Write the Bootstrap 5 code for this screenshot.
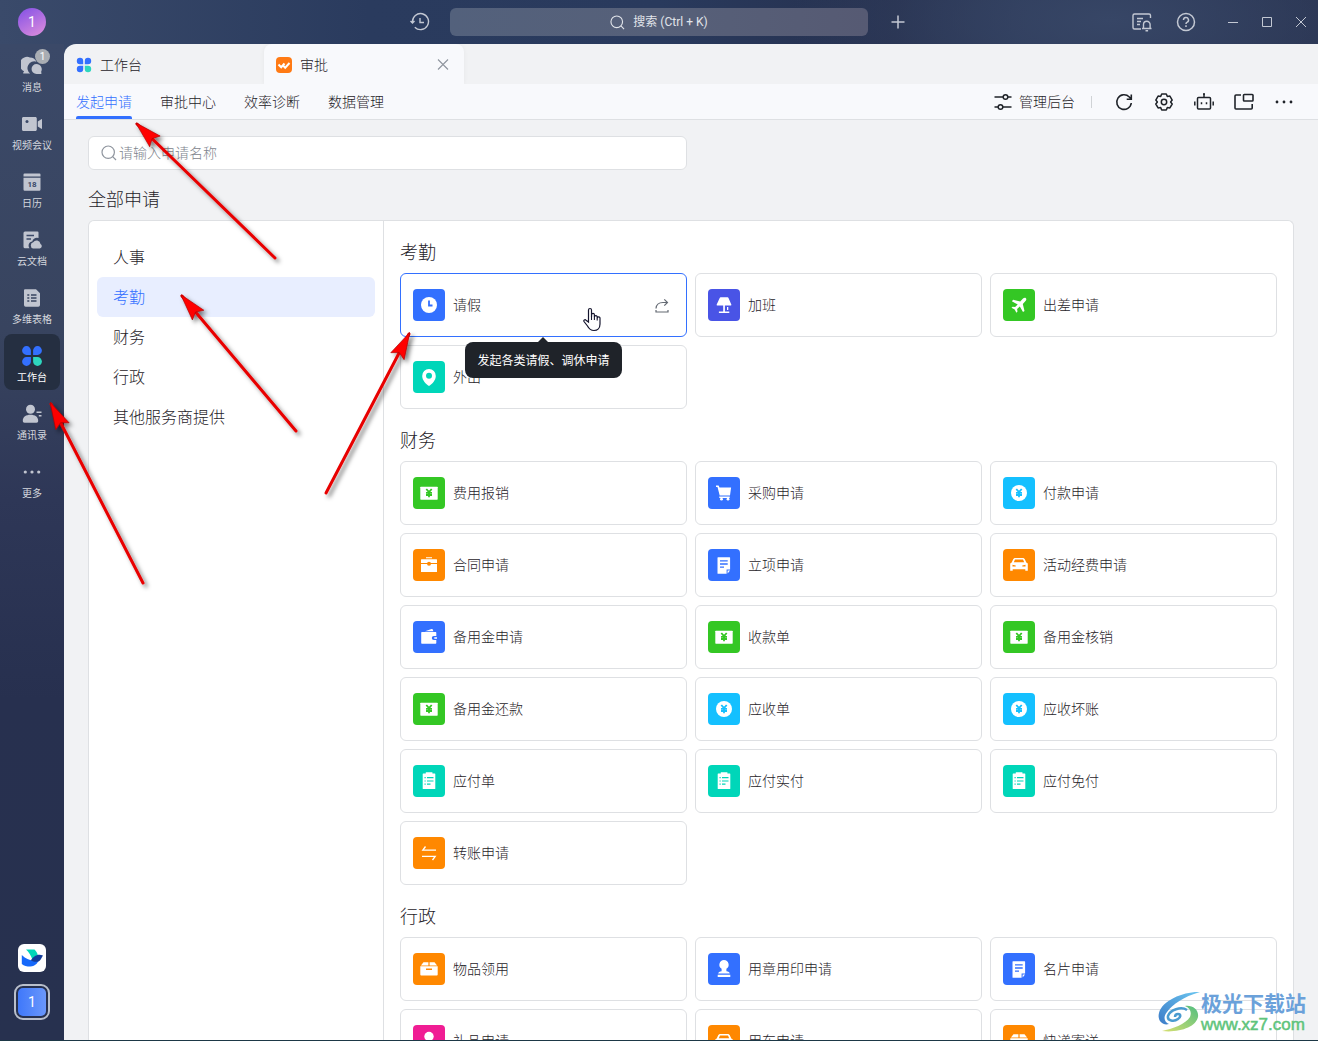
<!DOCTYPE html>
<html lang="zh-CN">
<head>
<meta charset="utf-8">
<meta name="viewport" content="width=device-width, initial-scale=1">
<title>工作台 - 审批</title>
<link href="https://cdn.jsdelivr.net/npm/bootstrap@5.3.0/dist/css/bootstrap.min.css" rel="stylesheet">
<style>
:root{--ink:#1f2329;--line:#dee0e3;--blue:#3370ff}
body{font-family:Roboto,"Noto Sans CJK SC",sans-serif;font-size:14px;line-height:20px;font-weight:300;color:var(--ink);background:#27314f}
button{font-weight:inherit;color:inherit}
svg{flex:none;display:block}
.app{height:100vh;overflow:hidden;border-bottom:1px solid #1d3846;
 background:radial-gradient(ellipse 320px 120px at 1110px 20px,#374666,transparent),linear-gradient(180deg,transparent 44px,#3b4968 44px,#38445f 330px,#2e3757 500px,#27304f 700px,#27314f) 0 0/64px 100% no-repeat,linear-gradient(90deg,#3a4a6a,#2a3b5e 28%,#293a5d 50%,#26304e 68%,#2b3857 78%,#28324f)}
.topbar{height:44px;flex:none;display:grid;grid-template-columns:1fr auto 1fr;color:#c3c8d3}
.bare{border:0;background:none;padding:0;display:flex;align-items:center;justify-content:center;color:inherit}
.bare.avatar{width:28px;height:28px;background:linear-gradient(150deg,#8250e6,#e08fdc);color:#fff;font-weight:400;margin-left:18px}
.bare.find{width:418px;height:28px;border-radius:6px;font-size:12px;font-weight:400;color:#e1e4ea;background:linear-gradient(90deg,#53617c,#566079 50%,#565a73)}
.rail{width:64px;flex:none;color:#c3c8d3}
.rail-item{width:56px;height:56px;margin-bottom:2px;border-radius:8px;display:flex;flex-direction:column;align-items:center;padding-top:11px;font-size:10px;line-height:14px;font-weight:400;color:#d4d7de;text-decoration:none;gap:2px;position:relative;white-space:nowrap}
.rail-item svg{color:#c1c5d0;margin-bottom:2px}
.rail-item.current{background:#252f41;color:#fff}
.count{position:absolute;left:31px;top:5px;width:15px;height:15px;border-radius:50%;background:#a9adb3;color:#fff;font-size:10px;line-height:15px;text-align:center}
.bare.dock{width:28px;height:28px;border-radius:6px;background:#fff}
.bare.team{width:36px;height:36px;border:2px solid #b9bfcb;border-radius:9px;padding:2px;margin-top:12px;margin-bottom:20px}
.team span{width:28px;height:28px;border-radius:5px;background:linear-gradient(90deg,#3f78fa,#6a97fb);color:#fff;line-height:28px;font-weight:400}
.pane{background:#f1f2f4;border-top-left-radius:12px;overflow:hidden}
.tabs{height:40px}
.tab{width:200px;padding:2px 14px 0 12px;gap:8px;font-weight:300}
.tab.current{background:#f8f9fc;border-radius:8px 8px 0 0;box-shadow:0 0 5px #0000000d}
.subbar{height:36px;background:#f8f9fc;border-bottom:1px solid var(--line);padding:0 24px 0 12px;position:relative}
.subnav{gap:28px}
.subnav a{color:var(--ink);text-decoration:none;line-height:37px;height:35px;display:block}
.subnav a.current{color:var(--blue);position:relative}
.subnav a.current::after{content:"";position:absolute;left:0;right:0;bottom:0;height:3px;border-radius:2px 2px 0 0;background:var(--blue)}
.tools{gap:20px;line-height:22px;padding-top:1px}
.rule{width:1px;height:12px;background:#d0d3d6;margin:0 2px 0 -4px}
.work{padding:16px 24px 0}
.field{height:34px;background:#fff;border:1px solid var(--line);border-radius:6px;padding:0 12px;gap:2px}
.field input{border:0;outline:0;background:none;padding:0;font-weight:300;width:100%}
.field input::placeholder{color:#7d838c;opacity:1}
h1{font-size:18px;line-height:26px;font-weight:300;margin:17px 0 7px}
h2{font-size:18px;line-height:26px;font-weight:300;margin:0;padding:19px 0 7px}
.board{background:#fff;border:1px solid var(--line);border-bottom:0;border-radius:6px 6px 0 0}
.kinds{width:295px;flex:none;border-right:1px solid var(--line);padding:16px 8px}
.kinds a{display:block;height:40px;line-height:42px;padding:0 16px;font-size:16px;color:var(--ink);text-decoration:none;border-radius:6px}
.kinds a.current{background:#e8eeff;color:var(--blue)}
.forms{padding:0 16px}
.form-tile{width:100%;height:64px;background:#fff;border:1px solid var(--line);border-radius:6px;padding:0 12px;display:flex;align-items:center;gap:8px;text-align:left}
.form-tile.hot{border-color:var(--blue)}
.form-tile .share{color:#646a73;margin-left:auto;margin-right:4px;margin-top:2px}
.glyph{width:32px;height:32px;border-radius:4px;background:currentColor}
.c-blue{color:#3370ff}.c-indigo{color:#4954e6}.c-green{color:#34c724}.c-teal{color:#00d6b9}.c-sky{color:#14c0ff}.c-orange{color:#ff8800}.c-pink{color:#f01d94}
.tip{position:absolute;left:50%;top:calc(100% + 5px);transform:translateX(-50%);z-index:3;background:var(--ink);color:#fff;font-size:12px;line-height:34px;padding:2px 12px 0;border-radius:8px;white-space:nowrap;font-weight:400}
.tip::before{content:"";position:absolute;left:50%;top:-5px;margin-left:-5px;border:5px solid transparent;border-top:0;border-bottom-color:var(--ink)}
.hand{position:absolute;left:183px;top:34px;z-index:4}
.marks{position:absolute;left:0;top:0;z-index:5;pointer-events:none}
.stamp{position:absolute;right:12px;bottom:6px;z-index:6}
.stamp-name{font-size:21px;line-height:24px;font-weight:700;color:#6ba1da}
.stamp-url{font-family:"Liberation Sans",sans-serif;font-size:17px;line-height:18px;font-weight:400;color:#5fc47c;-webkit-text-stroke:.5px #5fc47c}
</style>
<script src="https://cdn.jsdelivr.net/npm/bootstrap@5.3.0/dist/js/bootstrap.bundle.min.js"></script>
</head>
<body>
<svg width="0" height="0" class="position-absolute" aria-hidden="true">
 <defs>
 <g id="yen" fill="none" stroke="currentColor" stroke-width="1.800"><path d="M13.300 12 16 15.200 18.700 12M13 15.800h6M13 18h6M16 15v5.200"/></g>
 <symbol id="clock" viewBox="0 0 32 32"><circle cx="16" cy="16" r="8" fill="#fff"/><path d="M16 11.500V16.500H19.500" fill="none" stroke="currentColor" stroke-width="1.800"/></symbol>
 <symbol id="lamp" viewBox="0 0 32 32" fill="#fff"><path d="M12.600 8.300h7a1 1 0 0 1 .9.600l2.800 6.600a.7.700 0 0 1-.7 1H9.400a.7.700 0 0 1-.7-1l3-6.600a1 1 0 0 1 .9-.6zM15.200 16h1.700v6.500h4.400V24H10.900v-1.500h4.300zM19 18h1.300v3H19z"/></symbol>
 <symbol id="plane" viewBox="0 0 32 32" fill="#fff"><path d="M22.900 9.200c.8.800.4 2-.4 2.900l-2.700 2.800 1.700 7-1.500 1.200-3.200-5.700-2.700 2.700.4 2.500-1.100 1.100-1.700-3.200-3.200-1.700 1.100-1.100 2.500.4 2.600-2.600-5.900-3.200 1.400-1.500 7 1.600 2.800-2.800c.9-.8 2.200-1.200 2.900-.4z"/></symbol>
 <symbol id="pin" viewBox="0 0 32 32"><path d="M16 8a6.800 6.800 0 0 0-6.800 6.900C9.200 19.300 13 23 16 25c3-2 6.800-5.700 6.800-10.100A6.800 6.800 0 0 0 16 8z" fill="#fff"/><circle cx="16" cy="14.700" r="3" fill="currentColor"/></symbol>
 <symbol id="note" viewBox="0 0 32 32"><rect x="7.300" y="9.700" width="17.400" height="13" rx=".6" fill="#fff"/><use href="#yen"/></symbol>
 <symbol id="coin" viewBox="0 0 32 32"><circle cx="16" cy="16" r="8" fill="#fff"/><use href="#yen"/></symbol>
 <symbol id="cart" viewBox="0 0 32 32" fill="#fff"><path d="M8 8.400h2.600l.9 2.200h11.600l-1.100 8H11.700L9.500 10.100H8zM11.300 19.500h10.400V21H11.300z"/><circle cx="13.500" cy="22.200" r="1.400"/><circle cx="20" cy="22.200" r="1.400"/></symbol>
 <symbol id="case" viewBox="0 0 32 32"><path d="M13 9.300V8.200h6v1.100zM8.500 10.300h15a.5.500 0 0 1 .5.500V22.500a.5.500 0 0 1-.5.500h-15a.5.500 0 0 1-.5-.5V10.800a.5.500 0 0 1 .5-.5z" fill="#fff"/><path d="M8 14.500h16" stroke="currentColor"/><circle cx="16" cy="14.800" r="2" fill="currentColor"/></symbol>
 <symbol id="doc" viewBox="0 0 32 32"><path d="M10 8.300h11.600a.5.500 0 0 1 .5.500V20.600h-3.500v4.100H10a.5.500 0 0 1-.5-.5V8.800a.5.500 0 0 1 .5-.5zM19.600 21.600h2.500l-2.500 3z" fill="#fff"/><path d="M12 11.800h7.700M12 15h7.700M12 18.200h4" stroke="currentColor" stroke-width="1.300"/></symbol>
 <symbol id="car" viewBox="0 0 32 32"><path d="M11.600 9h8.800l1.300.9 1.600 3.500 1.500 1v7.300h-2.500v-1.500H9.700v1.500H7.200v-7.300l1.500-1 1.600-3.500z" fill="#fff"/><path d="M12 10.500h8l1.200 2.800H10.800zM9.500 15.800l3.200.6v1.200H9.500zM22.500 15.800l-3.200.6v1.200h3.200z" fill="currentColor"/></symbol>
 <symbol id="wallet" viewBox="0 0 32 32"><path d="M12 10.300 18.500 8a1 1 0 0 1 1.300.6l.6 1.700zM8.900 11h13.700a.7.700 0 0 1 .7.700V15h-2.500a1.900 1.900 0 0 0 0 4h2.500v3a.7.700 0 0 1-.7.700H8.900a.7.700 0 0 1-.7-.7V11.700a.7.700 0 0 1 .7-.7zM21.300 16.200H24v1.600h-2.700z" fill="#fff"/></symbol>
 <symbol id="clip" viewBox="0 0 32 32"><path d="M12.800 7.300h6.600v1.200h2.400a.5.500 0 0 1 .5.500v14.500a.5.500 0 0 1-.5.500H10.200a.5.500 0 0 1-.5-.5V9a.5.500 0 0 1 .5-.5h2.600z" fill="#fff"/><path d="M11.500 12.700h1.200M14 12.700h6.500M11.500 16h1.200M14 16h6.500M11.500 19.200h1.200M14 19.200h3.500" stroke="currentColor" stroke-width="1.200"/></symbol>
 <symbol id="swap" viewBox="0 0 32 32" fill="none" stroke="#fff" stroke-width="1.300"><path d="M12.500 9.500 9.800 13.200H23M19.500 23l2.700-3.700H9"/></symbol>
 <symbol id="box" viewBox="0 0 32 32"><path d="M10.500 9.300h4.900v3.200H7.900zM16.600 9.300h4.900l2.600 3.200h-7.500zM7.300 13.200h17.400V21.500a.9.900 0 0 1-.9.900H8.200a.9.900 0 0 1-.9-.9z" fill="#fff"/><path d="M13 16.200h6" stroke="currentColor" stroke-width="1.500"/></symbol>
 <symbol id="seal" viewBox="0 0 32 32" fill="#fff"><path d="M16 7a4.700 4.700 0 0 1 2.400 8.700v2.600c2 .4 3.400 1 3.400 2.200H10.200c0-1.200 1.400-1.800 3.400-2.200v-2.600A4.700 4.700 0 0 1 16 7zM9.700 21.700h12.600V24H9.700z"/></symbol>
 <symbol id="gift" viewBox="0 0 32 32" fill="#fff"><circle cx="16" cy="11.500" r="4.700"/><path d="M8 24c0-4 3-7 8-7s8 3 8 7z"/></symbol>
 <symbol id="clover" viewBox="0 0 20 20"><path d="M5 1a4 4 0 0 1 4 4v4H5a4 4 0 0 1 0-8zM15 1a4 4 0 0 1 0 8h-4V5a4 4 0 0 1 4-4zM5 11h4v4a4 4 0 1 1-4-4z" fill="#3370ff"/><path d="M11 11h4a4 4 0 1 1-4 4z" fill="#2ed6be"/></symbol>
 <symbol id="lens" viewBox="0 0 16 16" fill="none" stroke="currentColor" stroke-width="1.200"><circle cx="7.200" cy="7.200" r="6.200"/><path d="m11.700 11.700 3.300 3.300"/></symbol>
 </defs>
</svg>

<div class="app d-flex flex-column">
 <header class="topbar align-items-center">
  <button class="bare avatar rounded-circle" aria-label="账号">1</button>
  <div class="d-flex align-items-center" style="gap:20px">
   <button class="bare" aria-label="历史记录"><svg width="20" height="20" viewBox="0 0 20 20" fill="none" stroke="currentColor" stroke-width="1.400"><path d="M2.500 10a8 8 0 1 1 2.300 5.200M.5 9l2 2 2-2M10 6v4.500h4"/></svg></button>
   <button class="bare find"><svg width="15" height="15" class="me-2"><use href="#lens"/></svg>搜索 (Ctrl + K)</button>
   <button class="bare" aria-label="新建"><svg width="20" height="20" viewBox="0 0 20 20" stroke="currentColor" stroke-width="1.500"><path d="M10 3.500v13M3.500 10h13"/></svg></button>
  </div>
  <div class="d-flex align-items-center justify-content-end pe-2">
   <button class="bare me-4" aria-label="通知"><svg width="20" height="20" viewBox="0 0 20 20" fill="none" stroke="currentColor" stroke-width="1.400"><path d="M18.500 6V3.500A1.500 1.500 0 0 0 17 2H2.500A1.500 1.500 0 0 0 1 3.500v12A1.500 1.500 0 0 0 2.500 17H9M5 6.500h6M5 9.500h4M5 12.500h3M10 16.500h9.500M11.500 16v-3.500a3.300 3.300 0 0 1 6.600 0V16M13.500 18.700h2.600"/></svg></button>
   <button class="bare me-4" aria-label="帮助"><svg width="20" height="20" viewBox="0 0 20 20" fill="none" stroke="currentColor" stroke-width="1.500"><circle cx="10" cy="10" r="8.500"/><path d="M7.500 8a2.500 2.500 0 1 1 3.700 2.200c-.8.400-1.200.9-1.200 1.800M10 13.300v1.600"/></svg></button>
   <button class="bare ms-2 me-4" aria-label="最小化"><svg width="10" height="12" viewBox="0 0 10 12" stroke="currentColor"><path d="M0 6.500h10"/></svg></button>
   <button class="bare me-4" aria-label="最大化"><svg width="10" height="12" viewBox="0 0 10 12" fill="none" stroke="currentColor"><path d="M.5 1.500h9v9h-9z"/></svg></button>
   <button class="bare me-1" aria-label="关闭窗口"><svg width="10" height="12" viewBox="0 0 10 12" stroke="currentColor"><path d="m0 1 10 10M10 1 0 11"/></svg></button>
  </div>
 </header>

 <div class="d-flex flex-grow-1" style="min-height:0">
  <nav class="rail d-flex flex-column align-items-center">
   <a class="rail-item" href="#"><svg width="22" height="22" viewBox="0 0 22 22" fill="currentColor"><path d="M9 2.500a7.500 7.500 0 0 1 6.500 4.200 6.800 6.800 0 0 0-6.400 11.800H2.800c-.6 0-.9-.6-.5-1l.8-1.200A7.500 7.500 0 0 1 9 2.500z"/><path d="M15.500 9a5.300 5.300 0 0 1 4.600 7.900l.4 1.200c.1.500-.1.800-.6.800h-4.400a4.900 4.900 0 0 1 0-9.900z"/></svg>消息<span class="count">1</span></a>
   <a class="rail-item" href="#"><svg width="22" height="22" viewBox="0 0 22 22"><path d="M2.500 4h11.800c.9 0 1.500.6 1.500 1.500v11c0 .9-.6 1.500-1.500 1.500H2.500C1.600 18 1 17.400 1 16.500v-11C1 4.600 1.600 4 2.500 4zM16.800 8.500l3.500-2.300c.4-.2.700 0 .7.400v8.800c0 .4-.3.600-.7.400l-3.500-2.300z" fill="currentColor"/><circle cx="6" cy="8.500" r="1.500" fill="#3b4968"/></svg>视频会议</a>
   <a class="rail-item" href="#"><svg width="22" height="22" viewBox="0 0 22 22"><path d="M3.500 2.500h15a1 1 0 0 1 1 1v2h-17v-2a1 1 0 0 1 1-1zM2.500 6.700h17v11.800a1.200 1.200 0 0 1-1.200 1.200H3.700a1.200 1.200 0 0 1-1.200-1.200z" fill="currentColor"/><text x="11" y="16" font-size="8" font-weight="700" text-anchor="middle" fill="#3b4968">18</text></svg>日历</a>
   <a class="rail-item" href="#"><svg width="22" height="22" viewBox="0 0 22 22"><path d="M4 2.500h12.500a1 1 0 0 1 1 1V9a5.500 5.500 0 0 0-6.300 3.400 4.300 4.300 0 0 0-2.700 6.900H4a1.500 1.500 0 0 1-1.500-1.500V4A1.500 1.500 0 0 1 4 2.500zM12.200 19.500a3.200 3.200 0 0 1 0-6.200 4 4 0 0 1 7.300 1.700 2.400 2.400 0 0 1-.7 4.500z" fill="currentColor"/><path d="M5.500 6.500H13M5.500 10H10" stroke="#3b4968" stroke-width="1.500"/></svg>云文档</a>
   <a class="rail-item" href="#"><svg width="22" height="22" viewBox="0 0 22 22"><path d="M4 2.300h11l4 4V18a1.700 1.700 0 0 1-1.700 1.700H4.700A1.700 1.700 0 0 1 3 18V3.300a1 1 0 0 1 1-1z" fill="currentColor"/><path d="M6.300 8h2M10 8h5.500M6.300 11h2M10 11h5.500M6.300 14h2M10 14h5.500" stroke="#38445f" stroke-width="1.500"/></svg>多维表格</a>
   <a class="rail-item current" href="#"><svg width="22" height="22"><use href="#clover"/></svg>工作台</a>
   <a class="rail-item" href="#"><svg width="22" height="22" viewBox="0 0 22 22" fill="currentColor"><circle cx="9.500" cy="6.200" r="4.500"/><path d="M1.800 17.800c0-4 3.200-6 7.700-6s7.700 2 7.700 6c0 1.300-.5 2-1.800 2H3.600c-1.300 0-1.800-.7-1.800-2zM15.500 8.500h5V10h-5zM17.800 12h2.700v1.500h-2.700z"/></svg>通讯录</a>
   <a class="rail-item" href="#"><svg width="22" height="22" viewBox="0 0 22 22" fill="currentColor"><circle cx="4.300" cy="11" r="1.600"/><circle cx="11" cy="11" r="1.600"/><circle cx="17.700" cy="11" r="1.600"/></svg>更多</a>
   <button class="bare dock mt-auto" aria-label="飞书"><svg width="24" height="24" viewBox="0 0 24 24"><path d="M6 3.500h8.500c1.600 1.600 2.700 3.300 3.200 5.300L12.500 14C11 9.500 8.800 6 6 3.500z" fill="#00d6b9"/><path d="M1.800 9c4 3.700 7.500 5.300 11 5.600 3 0 5-2 7.500-5-1.500 7-4.800 11-10 11-3.700 0-6.200-.8-8.500-2.600z" fill="#1668fa"/><path d="M10.800 14.400C13.500 10.500 16.800 7.500 23 9.400c-1.600 2.200-2.200 5-4.500 6-2.300.9-5 .4-7.700-1z" fill="#133c9a"/></svg></button>
   <button class="bare team" aria-label="当前团队"><span>1</span></button>
  </nav>

  <div class="pane flex-grow-1" style="min-width:0">
   <div class="tabs d-flex">
    <div class="tab d-flex align-items-center"><svg width="16" height="16"><use href="#clover"/></svg>工作台</div>
    <div class="tab current d-flex align-items-center"><svg width="16" height="16" viewBox="0 0 16 16"><rect width="16" height="16" rx="4" fill="#ff7a14"/><path d="m2.500 7.500 2.700 2.700L8.500 6.500M6.800 8.300l2.400 2.400 4.300-4.700" fill="none" stroke="#fff" stroke-width="2"/></svg>审批
     <button class="bare ms-auto" aria-label="关闭标签"><svg width="14" height="14" viewBox="0 0 14 14" stroke="#8f959e" stroke-width="1.100"><path d="m2 1.500 10 10M12 1.500l-10 10"/></svg></button></div>
   </div>
   <div class="subbar d-flex align-items-center justify-content-between">
    <nav class="subnav d-flex"><a class="current" href="#">发起申请</a><a href="#">审批中心</a><a href="#">效率诊断</a><a href="#">数据管理</a></nav>
    <div class="tools d-flex align-items-center">
     <button class="bare" style="gap:6px"><svg width="20" height="20" viewBox="0 0 20 20" fill="none" stroke="currentColor" stroke-width="1.500"><path d="M1.500 5H10M15 5h3.500M1.500 15H5M10 15h8.500"/><circle cx="12.500" cy="5" r="2.300"/><circle cx="7.500" cy="15" r="2.300"/></svg>管理后台</button>
     <span class="rule"></span>
     <button class="bare" aria-label="刷新"><svg width="20" height="20" viewBox="0 0 20 20" fill="none" stroke="currentColor" stroke-width="1.600"><path d="M17.300 11A7.300 7.300 0 1 1 15.300 5l2 2M17.300 2.500V7.200h-4.600"/></svg></button>
     <button class="bare" aria-label="设置"><svg width="20" height="20" viewBox="0 0 20 20" fill="none" stroke="currentColor" stroke-width="1.500"><path d="M7.700 2h4.600l1 2.400 2.600-.3 2.300 4-1.600 1.900 1.600 2-2.300 3.900-2.600-.3-1 2.400H7.700l-1-2.400-2.600.3-2.300-3.900 1.600-2-1.600-1.900 2.300-4 2.600.3z" stroke-linejoin="round"/><circle cx="10" cy="10" r="2.700"/></svg></button>
     <button class="bare" aria-label="机器人"><svg width="20" height="20" viewBox="0 0 20 20" fill="none" stroke="currentColor" stroke-width="1.500"><rect x="3.500" y="5.500" width="13" height="11.500" rx="1"/><path d="M10 5.500V2M.8 9.500v4M19.200 9.500v4M7.500 10.200v2M12.500 10.200v2"/><circle cx="10" cy="2" r="1.100" fill="currentColor" stroke="none"/></svg></button>
     <button class="bare" aria-label="独立窗口"><svg width="20" height="20" viewBox="0 0 20 20" fill="none" stroke="currentColor" stroke-width="1.600"><path d="M7 3H2a1 1 0 0 0-1 1v12a1 1 0 0 0 1 1h15.200a1 1 0 0 0 1-1v-4"/><rect x="9.500" y="2.500" width="9.500" height="6.500" rx=".8"/></svg></button>
     <button class="bare" aria-label="更多操作"><svg width="20" height="20" viewBox="0 0 20 20" fill="currentColor"><circle cx="3" cy="10" r="1.400"/><circle cx="10" cy="10" r="1.400"/><circle cx="17" cy="10" r="1.400"/></svg></button>
    </div>
   </div>

   <main class="work">
    <div class="row gx-2"><div class="col-6"><label class="field d-flex align-items-center"><svg width="16" height="16" color="#8f959e"><use href="#lens"/></svg><input type="text" placeholder="请输入申请名称" aria-label="请输入申请名称"></label></div></div>
    <h1>全部申请</h1>
    <div class="board d-flex">
     <nav class="kinds"><a href="#">人事</a><a class="current" href="#">考勤</a><a href="#">财务</a><a href="#">行政</a><a href="#">其他服务商提供</a></nav>
     <div class="forms flex-grow-1">
      <section>
       <h2>考勤</h2>
       <div class="row row-cols-3 g-2">
        <div class="col"><div class="position-relative"><button class="form-tile hot" aria-describedby="tip"><svg class="glyph c-blue"><use href="#clock"/></svg>请假<svg class="share" width="16" height="16" viewBox="0 0 16 16" fill="none" stroke="currentColor" stroke-width="1.200"><path d="M2 10.500C2.300 6.800 5 4.500 9 4.500h4.500M10.300 1.300 13.500 4.500l-3.200 3.200M2 12v2h12v-2"/></svg></button>
         <div class="tip" id="tip" role="tooltip">发起各类请假、调休申请</div>
         <svg class="hand" width="18" height="25" viewBox="0 0 18 25"><path d="M5.500 15V3a1.500 1.500 0 0 1 3 0v7l.1-2.300a1.400 1.400 0 0 1 2.800 0V10a1.400 1.400 0 0 1 2.800.2v1a1.400 1.400 0 0 1 2.800.3V17c0 4-2.500 6.500-6 6.500-3.300 0-5-1.500-6.500-4.500L1 14.500c-.7-1.500 1-2.300 2-1.300z" fill="#fff" stroke="#15152e" stroke-width="1.200"/><path d="M8.500 9.500V13M11.400 10v3M14.200 11v2.500" stroke="#15152e" stroke-width="1.100"/></svg></div></div>
        <div class="col"><button class="form-tile"><svg class="glyph c-indigo"><use href="#lamp"/></svg>加班</button></div>
        <div class="col"><button class="form-tile"><svg class="glyph c-green"><use href="#plane"/></svg>出差申请</button></div>
        <div class="col"><button class="form-tile"><svg class="glyph c-teal"><use href="#pin"/></svg>外出</button></div>
       </div>
      </section>
      <section>
       <h2>财务</h2>
       <div class="row row-cols-3 g-2">
        <div class="col"><button class="form-tile"><svg class="glyph c-green"><use href="#note"/></svg>费用报销</button></div>
        <div class="col"><button class="form-tile"><svg class="glyph c-blue"><use href="#cart"/></svg>采购申请</button></div>
        <div class="col"><button class="form-tile"><svg class="glyph c-sky"><use href="#coin"/></svg>付款申请</button></div>
        <div class="col"><button class="form-tile"><svg class="glyph c-orange"><use href="#case"/></svg>合同申请</button></div>
        <div class="col"><button class="form-tile"><svg class="glyph c-blue"><use href="#doc"/></svg>立项申请</button></div>
        <div class="col"><button class="form-tile"><svg class="glyph c-orange"><use href="#car"/></svg>活动经费申请</button></div>
        <div class="col"><button class="form-tile"><svg class="glyph c-blue"><use href="#wallet"/></svg>备用金申请</button></div>
        <div class="col"><button class="form-tile"><svg class="glyph c-green"><use href="#note"/></svg>收款单</button></div>
        <div class="col"><button class="form-tile"><svg class="glyph c-green"><use href="#note"/></svg>备用金核销</button></div>
        <div class="col"><button class="form-tile"><svg class="glyph c-green"><use href="#note"/></svg>备用金还款</button></div>
        <div class="col"><button class="form-tile"><svg class="glyph c-sky"><use href="#coin"/></svg>应收单</button></div>
        <div class="col"><button class="form-tile"><svg class="glyph c-sky"><use href="#coin"/></svg>应收坏账</button></div>
        <div class="col"><button class="form-tile"><svg class="glyph c-teal"><use href="#clip"/></svg>应付单</button></div>
        <div class="col"><button class="form-tile"><svg class="glyph c-teal"><use href="#clip"/></svg>应付实付</button></div>
        <div class="col"><button class="form-tile"><svg class="glyph c-teal"><use href="#clip"/></svg>应付免付</button></div>
        <div class="col"><button class="form-tile"><svg class="glyph c-orange"><use href="#swap"/></svg>转账申请</button></div>
       </div>
      </section>
      <section>
       <h2>行政</h2>
       <div class="row row-cols-3 g-2">
        <div class="col"><button class="form-tile"><svg class="glyph c-orange"><use href="#box"/></svg>物品领用</button></div>
        <div class="col"><button class="form-tile"><svg class="glyph c-blue"><use href="#seal"/></svg>用章用印申请</button></div>
        <div class="col"><button class="form-tile"><svg class="glyph c-blue"><use href="#doc"/></svg>名片申请</button></div>
        <div class="col"><button class="form-tile"><svg class="glyph c-pink"><use href="#gift"/></svg>礼品申请</button></div>
        <div class="col"><button class="form-tile"><svg class="glyph c-orange"><use href="#car"/></svg>用车申请</button></div>
        <div class="col"><button class="form-tile"><svg class="glyph c-orange"><use href="#box"/></svg>快递寄送</button></div>
       </div>
      </section>
     </div>
    </div>
   </main>
  </div>
 </div>
</div>

<svg class="marks" width="460" height="600" viewBox="0 0 460 600" aria-hidden="true">
 <defs>
  <marker id="head" markerUnits="userSpaceOnUse" markerWidth="28" markerHeight="18" refX="26" refY="9" orient="auto"><path d="M28 9 1 1.500 5 9 1 16.500z" fill="#f00" stroke="#a00" stroke-width=".6"/></marker>
  <filter id="soft" x="-20%" y="-20%" width="150%" height="150%"><feDropShadow dx="3" dy="3" stdDeviation="2" flood-color="#000" flood-opacity=".5"/></filter>
 </defs>
 <g stroke="#e80000" stroke-width="3" stroke-linecap="round" filter="url(#soft)">
  <path d="M275 258 137 124" marker-end="url(#head)"/>
  <path d="M296 431 182 296" marker-end="url(#head)"/>
  <path d="M326 493 409 334" marker-end="url(#head)"/>
  <path d="M143 583 51 404" marker-end="url(#head)"/>
 </g>
</svg>

<div class="stamp d-flex align-items-center">
 <svg width="44" height="44" viewBox="0 0 44 44"><defs><linearGradient id="sky" x1="0" y1="1" x2="1" y2="0"><stop offset="0" stop-color="#3c7cc8"/><stop offset="1" stop-color="#6cc6f0"/></linearGradient><linearGradient id="leaf" x1="0" y1="1" x2="1" y2="0"><stop offset="0" stop-color="#d8e070"/><stop offset="1" stop-color="#52be80"/></linearGradient></defs>
 <path d="M43 1C28 0 5 9 2 22c-2 8 4 13 10 11-5-2-6-7-2-12C16 13 26 6 43 1z" fill="url(#sky)"/><path d="M28 15c8-1 14 4 13 11C39 36 22 42 5 40c10-2 24-7 28-14 2-5 0-9-5-11z" fill="url(#leaf)"/><path d="M30 19c-6-4-17 0-19 6-1 5 6 6 10 3 3-2 3-5 0-5-2 0-3 1-3 3" fill="none" stroke="#4a9bd0" stroke-width="2.500"/></svg>
 <div><div class="stamp-name">极光下载站</div><div class="stamp-url">www.xz7.com</div></div>
</div>
</body>
</html>
